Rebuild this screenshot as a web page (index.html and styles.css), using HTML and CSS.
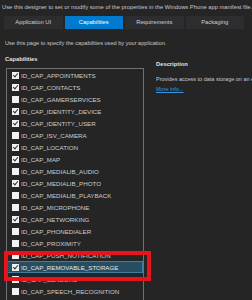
FILE: index.html
```html
<!DOCTYPE html>
<html>
<head>
  <title>Package.appxmanifest</title>
  <meta name="viewport" content="width=device-width, initial-scale=1">
  <link rel="stylesheet" href="styles.css">
</head>
<body>
  <div class="intro">Use this designer to set or modify some of the properties in the Windows Phone app manifest file.</div>

  <div class="tabs">
    <div class="tab">Application UI</div>
    <div class="tab active">Capabilities</div>
    <div class="tab">Requirements</div>
    <div class="tab">Packaging</div>
  </div>

  <div class="page">
    <p class="hint">Use this page to specify the capabilities used by your application.</p>

    <div class="columns">
      <section class="caps">
        <h2>Capabilities</h2>
        <ul class="caplist">
          <li><span class="box on"></span>ID_CAP_APPOINTMENTS</li>
          <li><span class="box on"></span>ID_CAP_CONTACTS</li>
          <li><span class="box"></span>ID_CAP_GAMERSERVICES</li>
          <li><span class="box on"></span>ID_CAP_IDENTITY_DEVICE</li>
          <li><span class="box on"></span>ID_CAP_IDENTITY_USER</li>
          <li><span class="box"></span>ID_CAP_ISV_CAMERA</li>
          <li><span class="box on"></span>ID_CAP_LOCATION</li>
          <li><span class="box on"></span>ID_CAP_MAP</li>
          <li><span class="box"></span>ID_CAP_MEDIALIB_AUDIO</li>
          <li><span class="box on"></span>ID_CAP_MEDIALIB_PHOTO</li>
          <li><span class="box"></span>ID_CAP_MEDIALIB_PLAYBACK</li>
          <li><span class="box"></span>ID_CAP_MICROPHONE</li>
          <li><span class="box on"></span>ID_CAP_NETWORKING</li>
          <li><span class="box"></span>ID_CAP_PHONEDIALER</li>
          <li><span class="box"></span>ID_CAP_PROXIMITY</li>
          <li><span class="box"></span>ID_CAP_PUSH_NOTIFICATION</li>
          <li class="selected"><span class="box on"></span>ID_CAP_REMOVABLE_STORAGE</li>
          <li><span class="box"></span>ID_CAP_SENSORS</li>
          <li><span class="box"></span>ID_CAP_SPEECH_RECOGNITION</li>
        </ul>
        <!-- annotation drawn over the list -->
        <div class="highlight"></div>
      </section>

      <section class="desc">
        <h2>Description</h2>
        <p>Provides access to data storage on an external card.</p>
        <a href="#">More info...</a>
      </section>
    </div>
  </div>
</body>
</html>
```

FILE: styles.css
```css
* {padding: 0; margin: 0; box-sizing: border-box;}
html {font-family: "Liberation Sans", Arial, sans-serif;}

body {background-color: #252526; color: #c8c8c8; font-size: 5.5px; overflow: hidden; height: 300px;}

.intro {height: 16px; line-height: 14px; padding-left: 2px; white-space: nowrap; font-size: 5.8px;}

.tabs {display: flex; gap: 2px; margin: 0 8px 0 4px; height: 13px;}

.tab {flex: 1; background-color: #2d2d30; color: #d0d0d0; text-align: center; line-height: 13px; font-size: 5.8px;}

.tab.active {background-color: #007acc; color: #ffffff;}

.page {padding: 9px 0 0 5px;}

.hint {line-height: 10px; white-space: nowrap; font-size: 5.6px;}

.columns {display: flex; margin-top: 6px;}

h2 {font-size: 5.8px; font-weight: bold; color: #e0e0e0; line-height: 10px;}

.caps {position: relative; width: 139px; flex: none;}

.caplist {list-style: none; margin: 4px 0 0 1px; border: 1px solid #707070; border-bottom: none; height: 240px; overflow: hidden;}

.caplist li {display: flex; align-items: center; gap: 2px; height: 12px; padding-left: 5px; white-space: nowrap; color: #cccccc; font-size: 6.2px;}

.caplist li.selected {background-color: #254e63; border: 1px solid #3d7fa3; color: #e8e8e8; padding-left: 4px;}

.box {width: 7px; height: 7px; background-color: #f2f2f2; position: relative; flex: none;}

.box.on::after {
    content: "";
    position: absolute;
    left: 2px;
    top: 0px;
    width: 2px;
    height: 4px;
    border: solid #333;
    border-width: 0 1px 1px 0;
    transform: rotate(40deg);
}

.highlight {position: absolute; left: -1px; top: 197px; width: 147px; height: 30px; border: 4px solid #e8141b;}

.desc {flex: 1; min-width: 0; margin-left: 12px; padding-top: 5px; white-space: nowrap; overflow: hidden;}

.desc p {line-height: 10px; margin-top: 5px;}

.desc a {color: #3a96dd; display: block; line-height: 10px;}
```
